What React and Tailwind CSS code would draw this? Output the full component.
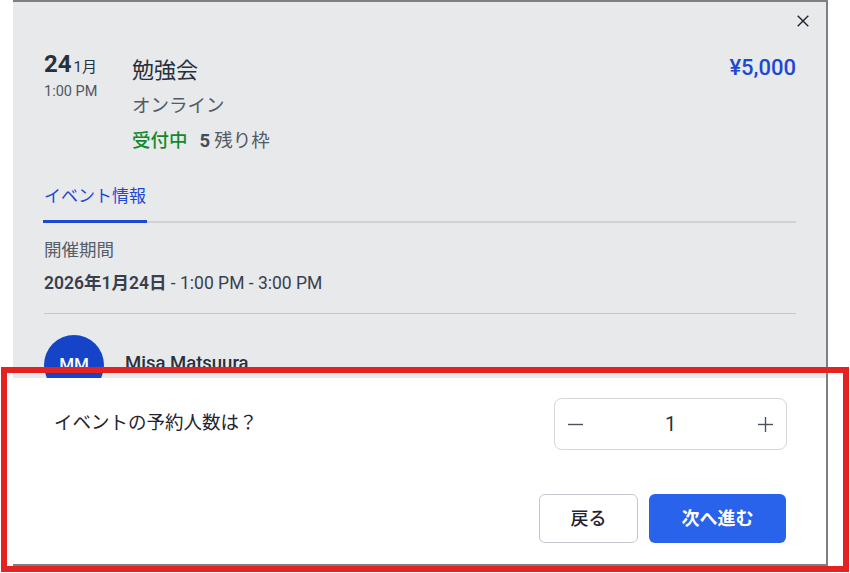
export default function App() {
  return (
    <div className="relative w-[850px] h-[573px] bg-white overflow-hidden font-[Roboto,'Noto_Sans_CJK_JP',sans-serif]">
      <div className="ml-[13px] w-[815px] h-[566px] border-t-2 border-r-2 border-b-2 border-[#7f7f7f] flex flex-col">
        {/* dimmed modal body */}
        <div className="relative h-[376px] shrink-0 overflow-hidden bg-[#e8e9eb] pl-[31px] pr-[30px] pt-[48px]">
          <button className="absolute right-[17px] top-[13px] w-[12px] h-[12px]">
            <svg width="12" height="12" viewBox="0 0 12 12" fill="none" stroke="#1f2430" strokeWidth="1.4">
              <line x1="0.7" y1="0.7" x2="11.3" y2="11.3" />
              <line x1="11.3" y1="0.7" x2="0.7" y2="11.3" />
            </svg>
          </button>

          <div className="flex justify-between items-start">
            <div className="flex">
              <div className="w-[88px] flex flex-col">
                <div className="flex items-baseline">
                  <span className="text-[24px] leading-[28px] font-bold text-[#27303d]">24</span>
                  <span className="ml-[2px] text-[15px] leading-[28px] text-[#27303d]">1月</span>
                </div>
                <div className="mt-[1px] text-[14.5px] leading-[20px] text-[#4f5764]">1:00 PM</div>
              </div>
              <div className="flex flex-col">
                <div className="mt-[5px] text-[22px] leading-[32px] text-[#29303b]">勉強会</div>
                <div className="mt-[6px] text-[18.5px] leading-[26px] text-[#525a66]">オンライン</div>
                <div className="mt-[9px] text-[18.5px] leading-[26px] flex">
                  <span className="font-medium text-[#13892e]">受付中</span>
                  <span className="ml-[12px] font-bold text-[#444b56]">5</span>
                  <span className="ml-[4px] text-[#525a66]">残り枠</span>
                </div>
              </div>
            </div>
            <div className="mt-[2px] text-[22px] leading-[32px] font-medium text-[#1d48d2]">¥5,000</div>
          </div>

          <div className="mt-[30px] flex border-b-2 border-[#d0d2d5]">
            <div className="-mb-[2px] -ml-px px-px pb-[12px] border-b-[3px] border-[#1d48d2] text-[17px] leading-[24px] text-[#1d48d2]">
              イベント情報
            </div>
          </div>

          <div className="mt-[15px] text-[17.5px] leading-[24px] text-[#575e69]">開催期間</div>
          <div className="mt-[9px] text-[17.5px] leading-[24px] text-[#39404b]">
            <span className="font-semibold">2026年1月24日</span>
            <span> - 1:00 PM - 3:00 PM</span>
          </div>

          <div className="mt-[18px] h-px bg-[#c5c7cb]" />

          <div className="mt-[21px] flex items-center gap-[21px]">
            <div className="w-[60px] h-[60px] rounded-full bg-[#1544c9] flex items-center justify-center text-white text-[17px] font-medium">
              MM
            </div>
            <div className="text-[18.5px] leading-[24px] font-medium text-[#29303b] -mt-[4px]">Misa Matsuura</div>
          </div>
        </div>

        {/* white sheet */}
        <div className="flex-1 bg-white pl-[41px] pr-[39px] pt-[20px]">
          <div className="flex items-center justify-between">
            <div className="text-[18.5px] leading-[26px] text-[#1f2530] -mt-[3px]">イベントの予約人数は？</div>
            <div className="w-[233px] h-[52px] rounded-lg border border-[#d3d6db] flex items-center px-[13px]">
              <svg width="15" height="15" viewBox="0 0 15 15" fill="none" stroke="#4b5260" strokeWidth="1.4">
                <line x1="0" y1="7.5" x2="15" y2="7.5" />
              </svg>
              <div className="flex-1 text-center text-[20px] leading-[26px] text-[#2a313c]">1</div>
              <svg width="15" height="15" viewBox="0 0 15 15" fill="none" stroke="#4b5260" strokeWidth="1.4">
                <line x1="0" y1="7.5" x2="15" y2="7.5" />
                <line x1="7.5" y1="0" x2="7.5" y2="15" />
              </svg>
            </div>
          </div>
          <div className="mt-[44px] mr-px flex justify-end gap-[11px]">
            <button className="w-[99px] h-[49px] rounded-md border border-[#c3c7cd] bg-white text-[18px] font-medium text-[#1f2530]">
              戻る
            </button>
            <button className="w-[137px] h-[49px] rounded-md bg-[#2962eb] text-[18px] font-bold text-white">
              次へ進む
            </button>
          </div>
        </div>
      </div>

      {/* annotation frame */}
      <div className="pointer-events-none absolute left-[1px] top-[367px] w-[848px] h-[205px] border-[6px] border-[#e52222]" />
    </div>
  );
}
